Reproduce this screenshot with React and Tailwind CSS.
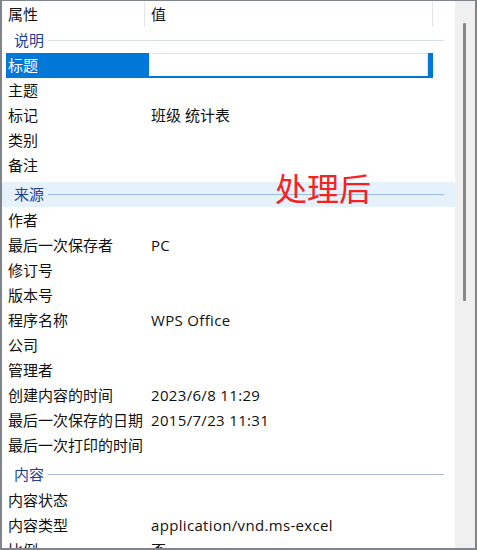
import React from "react";

const groups = [
  {
    title: "说明",
    first: true,
    line: "bg-[#d5deec]",
    rows: [
      { label: "标题", selected: true },
      { label: "主题" },
      { label: "标记", value: "班级 统计表" },
      { label: "类别" },
      { label: "备注" },
    ],
  },
  {
    title: "来源",
    hover: true,
    line: "bg-[#9dbbe3]",
    rows: [
      { label: "作者" },
      { label: "最后一次保存者", value: "PC" },
      { label: "修订号" },
      { label: "版本号" },
      { label: "程序名称", value: "WPS Office" },
      { label: "公司" },
      { label: "管理者" },
      { label: "创建内容的时间", value: "2023/6/8 11:29" },
      { label: "最后一次保存的日期", value: "2015/7/23 11:31" },
      { label: "最后一次打印的时间" },
    ],
  },
  {
    title: "内容",
    line: "bg-[#b0b8da]",
    rows: [
      { label: "内容状态" },
      { label: "内容类型", value: "application/vnd.ms-excel" },
      { label: "比例", value: "否" },
    ],
  },
];

const isLatin = (s) => /^[\x20-\x7e]+$/.test(s || "");

const GroupHeader = ({ title, first, hover, line }) => (
  <div className={first ? "" : "pt-[4px] pb-[1px]"}>
    <div
      className={`h-[25px] flex items-center pl-[12px] pr-[11px] rounded-[2px] ${
        hover ? "bg-[#e5f1fb]" : ""
      }`}
    >
      <span className="text-[#1f3f99] whitespace-nowrap">{title}</span>
      <div className={`flex-1 h-px ml-[4px] ${line}`} />
    </div>
  </div>
);

const Row = ({ label, value, selected }) => {
  if (selected) {
    return (
      <div className="h-[25px] flex">
        <div className="ml-[4px] w-[143px] bg-[#0078d7] text-white flex items-center pl-[2px] whitespace-nowrap">
          {label}
        </div>
        <div className="w-[284px] bg-[#0078d7] pr-[5px] pb-[2px]">
          <div className="h-full bg-white border-t border-r border-[#e3e3e3]" />
        </div>
      </div>
    );
  }
  return (
    <div className="h-[25px] flex items-center">
      <div className="w-[143px] pl-[6px] whitespace-nowrap">{label}</div>
      <div
        className={`pl-[6px] whitespace-nowrap ${
          isLatin(value) ? "tracking-[0.33px]" : ""
        }`}
      >
        {value}
      </div>
    </div>
  );
};

export default function App() {
  return (
    <div
      className="relative w-[477px] h-[550px] bg-white border-t border-l-2 border-r-2 border-b-2 border-[#80858c] flex overflow-hidden text-[15px] text-[#111]"
      style={{ fontFamily: '"Open Sans", "Noto Sans CJK SC", sans-serif' }}
    >
      <div className="flex-1 min-w-0 flex flex-col overflow-hidden">
        {/* column header */}
        <div className="h-[27px] shrink-0 flex">
          <div className="w-[142px] pl-[6px] flex items-center">属性</div>
          <div className="w-px my-[1px] bg-[#e5e5e5]" />
          <div className="w-[287px] pl-[6px] flex items-center">值</div>
          <div className="w-px my-[1px] bg-[#e5e5e5]" />
        </div>

        {groups.map((g) => (
          <div key={g.title} className="shrink-0">
            <GroupHeader {...g} />
            {g.rows.map((r) => (
              <Row key={r.label} {...r} />
            ))}
          </div>
        ))}
      </div>

      {/* scrollbar */}
      <div className="w-[20px] shrink-0 bg-[#f0f0f0] pt-[22px] pl-[8px]">
        <div className="w-[3px] h-[278px] bg-[#888888] rounded-[1px]" />
      </div>

      {/* overlay annotation */}
      <div
        className="absolute left-[273px] top-[170px] text-[32px] leading-none text-[#f52222]"
        style={{ fontFamily: '"Noto Sans CJK SC", sans-serif' }}
      >
        处理后
      </div>
    </div>
  );
}
